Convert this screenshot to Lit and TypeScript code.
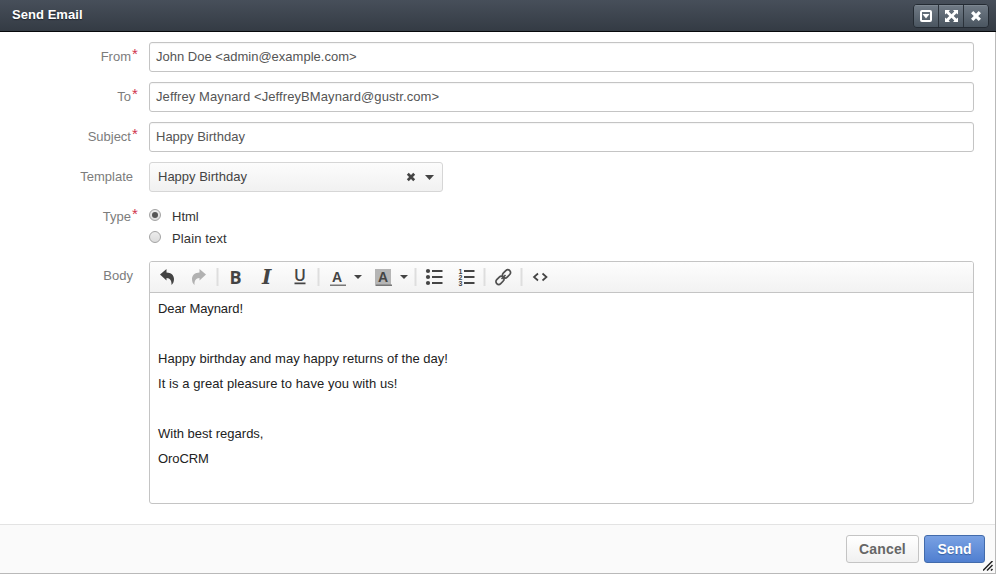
import { LitElement, html, svg, css, nothing } from "lit";
import { customElement, property } from "lit/decorators.js";

const cross = svg`<path d="M1.800 1.800L8.200 8.200M8.200 1.800L1.800 8.200" stroke="currentColor" stroke-width="2.700" fill="none"/>`;

@customElement("field-row")
class FieldRow extends LitElement {
  @property() label = "";
  @property({ type: Boolean }) required = false;
  static styles = css`
    :host { display: flex; align-items: flex-start; }
    .label { width: 133px; margin-right: 16px; text-align: right; color: #7c7c7c; line-height: 30px; position: relative; flex: none; }
    .label.required { padding-right: 2px; box-sizing: border-box; }
    .star { position: absolute; left: 132px; top: -3px; color: #d0344b; font-size: 15px; }
    .content { flex: 1; min-width: 0; }
  `;
  render() {
    return html`<div class="label ${this.required ? "required" : ""}">${this.label}${this.required ? html`<span class="star">*</span>` : nothing}</div>
      <div class="content"><slot></slot></div>`;
  }
}

@customElement("app-root")
class AppRoot extends LitElement {
  static styles = css`
    :host { display: flex; flex-direction: column; width: 996px; height: 574px; box-sizing: border-box;
      font: 13px "Liberation Sans", Arial, sans-serif; color: #555; background: #fff; position: relative; overflow: hidden; }
    * { box-sizing: border-box; }
    svg { display: block; }
    header { height: 32px; flex: none; display: flex; justify-content: space-between; padding: 4px 7px 0 12px;
      background: linear-gradient(#474f5a, #343b44); border-bottom: 1px solid #07090c; color: #fff; z-index: 1; }
    h1 { margin: 0; font-size: 13px; line-height: 21px; font-weight: bold; letter-spacing: .05px; text-shadow: 0 1px 1px #20252b; }
    .window { display: flex; width: 76px; height: 24px; border: 1px solid #242b33; border-radius: 4px; overflow: hidden; }
    .window span { flex: 1; display: flex; align-items: center; justify-content: center; background: linear-gradient(#717b86, #4a5560); box-shadow: inset 0 1px #7d8791; }
    .window span + span { border-left: 1px solid #2b323a; }
    .frame { flex: 1; display: flex; flex-direction: column; border-right: 1px solid #b9b9b9; border-bottom: 1px solid #b9b9b9; }
    .form { flex: 1; padding: 10px 21px 0 0; display: flex; flex-direction: column; gap: 10px; }
    .input { height: 30px; border: 1px solid #c4c4c4; border-radius: 3px; padding: 0 6px; line-height: 28px; box-shadow: inset 0 1px 1px #0000000b; }
    .from { letter-spacing: .01px; }
    .to { letter-spacing: .09px; }
    .select { width: 294px; height: 30px; border: 1px solid #d6d6d6; border-radius: 3px; padding: 0 7px 0 8px; line-height: 28px; color: #444;
      background: linear-gradient(#fcfcfc, #f1f1f1); display: flex; align-items: center; }
    .select > span { flex: 1; }
    .clear { margin: 0 8px 0 0; }
    .down { margin-top: 1px; }
    .radios { padding-top: 4px; height: 49px; color: #333; }
    .radio { display: flex; height: 22px; line-height: 22px; }
    .plain { letter-spacing: .13px; }
    .dot { width: 12px; height: 12px; border: 1px solid #a3a3a3; border-radius: 50%; background: linear-gradient(#ececec, #dcdcdc); margin: 3px 11px 0 0; display: flex; align-items: center; justify-content: center; }
    .dot.on::after { content: ""; width: 6px; height: 6px; border-radius: 50%; background: #555; }
    .editor { height: 243px; border: 1px solid #c4c4c4; border-radius: 3px; overflow: hidden; }
    .tools { height: 31px; background: linear-gradient(#fdfdfd, #f2f2f2); border-bottom: 1px solid #c4c4c4; }
    .message { padding: 3px 8px; color: #222; line-height: 25px; }
    .message div { height: 25px; }
    .tight { letter-spacing: -.08px; }
    .long { letter-spacing: .035px; }
    .longer { letter-spacing: .075px; }
    .glyph { font: bold 14px "Liberation Sans", sans-serif; }
    .bold { font: bold 18px "Open Sans", "Liberation Sans", sans-serif; }
    .italic { font: italic bold 20px "DejaVu Serif", serif; }
    .under { font: 600 16px "Open Sans", "Liberation Sans", sans-serif; }
    footer { height: 49px; border-top: 1px solid #e3e3e3; background: #fafafa; display: flex; justify-content: flex-end; gap: 5px; padding: 10px 10px 0 0; }
    button { height: 28px; border: 1px solid #c4c4c4; border-radius: 3px; padding: 0; font: bold 14px "Liberation Sans", sans-serif; letter-spacing: .15px; color: #666; background: linear-gradient(#fff, #f0f0f0); width: 73px; }
    .send { width: 61px; color: #fff; border-color: #426bab; background: linear-gradient(#79a1e3, #507fd0); text-shadow: 0 1px 1px #365e9f; letter-spacing: -.1px; }
    .grip { position: absolute; right: 3px; bottom: 3px; }
  `;
  render() {
    return html`
      <header>
        <h1>Send Email</h1>
        <div class="window">
          <span><svg width="12" height="12" viewBox="0 0 12 12"><rect x="1" y="1" width="10" height="10" rx="1" fill="none" stroke="#fff" stroke-width="2"/><path d="M2.500 4h7L6 8.500z" fill="#fff"/></svg></span>
          <span><svg width="13" height="12" viewBox="0 0 13 12" fill="#fff"><path d="M0 0h5L3.700 1.400 6.500 4.200l2.800-2.800L8 0h5v4.500l-1.500-1.300L8.700 6l2.800 2.800L13 7.500V12H8l1.300-1.400L6.500 7.800l-2.800 2.800L5 12H0V7.500l1.500 1.300L4.300 6 1.500 3.200 0 4.500z"/></svg></span>
          <span><svg width="12" height="12" viewBox="0 0 10 10">${cross}</svg></span>
        </div>
      </header>
      <div class="frame">
        <div class="form">
          <field-row label="From" required><div class="input from">John Doe &lt;admin@example.com&gt;</div></field-row>
          <field-row label="To" required><div class="input to">Jeffrey Maynard &lt;JeffreyBMaynard@gustr.com&gt;</div></field-row>
          <field-row label="Subject" required><div class="input">Happy Birthday</div></field-row>
          <field-row label="Template"><div class="select"><span>Happy Birthday</span>
            <svg class="clear" width="10" height="10" viewBox="0 0 10 10">${cross}</svg>
            <svg class="down" width="11" height="6"><path d="M1 0h9L5.500 5z" fill="#444"/></svg></div></field-row>
          <field-row label="Type" required><div class="radios">
            <div class="radio"><i class="dot on"></i>Html</div>
            <div class="radio plain"><i class="dot"></i>Plain text</div></div></field-row>
          <field-row label="Body"><div class="editor">
            <div class="tools"><svg width="420" height="30" viewBox="150 262 420 30" fill="#444">
              <path d="M160 274.500l6.500-5.500v3.500c4.500 0 7.500 2.800 7.500 6.500 0 2.500-.8 4.500-2.500 6 .3-3.800-1.200-7-5-7v2.500z"/>
              <path d="M206 274.500l-6.500-5.500v3.500c-4.500 0-7.500 2.800-7.500 6.500 0 2.500.8 4.500 2.500 6-.3-3.800 1.200-7 5-7v2.500z" fill="#b1b1b1"/>
              <path d="M216.500 268h2v18h-2zM317.500 268h2v18h-2zM414.500 268h2v18h-2zM483.500 268h2v18h-2zM520.500 268h2v18h-2z" fill="#dedede"/>
              <text x="229.500" y="284" class="bold">B</text>
              <text x="262" y="284" class="italic">I</text>
              <text x="294" y="281" class="under">U</text><path d="M294.500 282.500h11v1.800h-11z"/>
              <text x="332" y="282" class="glyph">A</text><path d="M330 284.500h16v1.500h-16z" fill="#777"/>
              <path d="M354 275h8l-4 4zM400 275h8l-4 4z"/>
              <path d="M375 269h16v17h-16z" fill="#b5b5b5"/><text x="378" y="282" class="glyph">A</text><path d="M376 284.500h16v1.500h-16z" fill="#777"/>
              <circle cx="428" cy="271" r="2.100"/><circle cx="428" cy="277" r="2.100"/><circle cx="428" cy="283" r="2.100"/>
              <path d="M432 270h10.500v2H432zM432 276h10.500v2H432zM432 282h10.500v2H432zM464 270h10.500v2H464zM464 276h10.500v2H464zM464 282h10.500v2H464z"/>
              <g font-family="Liberation Sans, sans-serif" font-weight="bold" font-size="7"><text x="458.500" y="273.500">1</text><text x="458.500" y="279.500">2</text><text x="458.500" y="285.500">3</text></g>
              <g fill="none" stroke="#505050" stroke-width="1.700"><rect x="-4.600" y="-2.800" width="9.200" height="5.600" rx="2.800" transform="translate(506.500 273.800) rotate(-45)"/><rect x="-4.600" y="-2.800" width="9.200" height="5.600" rx="2.800" transform="translate(500 280.300) rotate(-45)"/><path d="M501.500 279l4-4"/></g>
              <path d="M538 273.500l-4 3.500 4 3.500M542.500 273.500l4 3.500-4 3.500" fill="none" stroke="#444" stroke-width="1.700"/>
            </svg></div>
            <div class="message"><div class="tight">Dear Maynard!</div><div></div><div class="long">Happy birthday and may happy returns of the day!</div><div class="longer">It is a great pleasure to have you with us!</div><div></div><div>With best regards,</div><div class="tight">OroCRM</div></div>
          </div></field-row>
        </div>
        <footer><button>Cancel</button><button class="send">Send</button></footer>
      </div>
      <svg class="grip" width="10" height="10"><path d="M0 9.500L9.500 0M4 9.500L9.500 4M8 9.500L9.500 8" stroke="#222" stroke-width="1.500"/></svg>
    `;
  }
}
